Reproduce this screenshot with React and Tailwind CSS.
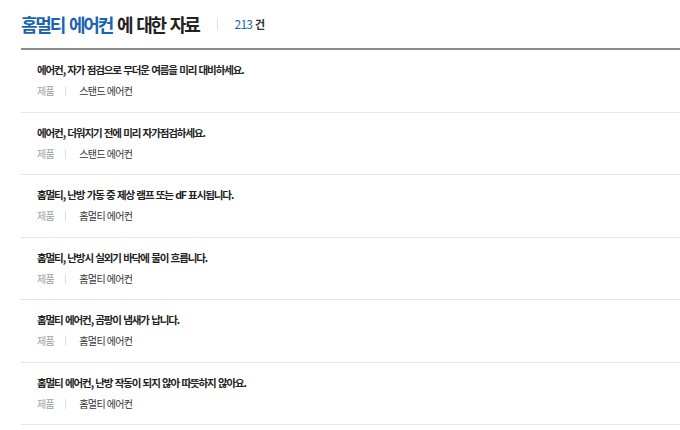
import React from 'react';

const items = [
  { title: '에어컨, 자가 점검으로 무더운 여름을 미리 대비하세요.', product: '스탠드 에어컨' },
  { title: '에어컨, 더워지기 전에 미리 자가점검하세요.', product: '스탠드 에어컨' },
  { title: '홈멀티, 난방 가동 중 제상 램프 또는 dF 표시됩니다.', product: '홈멀티 에어컨' },
  { title: '홈멀티, 난방시 실외기 바닥에 물이 흐릅니다.', product: '홈멀티 에어컨' },
  { title: '홈멀티 에어컨, 곰팡이 냄새가 납니다.', product: '홈멀티 에어컨' },
  { title: '홈멀티 에어컨, 난방 작동이 되지 않아 따뜻하지 않아요.', product: '홈멀티 에어컨' },
];

const font = { fontFamily: '"Noto Sans CJK KR", "Noto Sans", sans-serif' };

export default function App() {
  return (
    <div className="w-[680px] h-[430px] bg-white overflow-hidden pl-[21px]" style={font}>
      <div className="h-[50px] flex items-center border-b-2 border-[#8a8a8a]">
        <h2 className="text-[18px] leading-[24px] font-bold tracking-[-2.2px] [word-spacing:3px] text-[#222]">
          <span className="text-[#1a64b0]">홈멀티 에어컨</span> 에 대한 자료
        </h2>
        <span className="ml-[18px] w-px h-[12px] bg-[#e0e0e0]" />
        <span className="ml-[17px] text-[12px] text-[#1a64b0] tracking-[-0.8px]">213</span>
        <span className="ml-[3px] text-[11px] font-bold text-[#333]">건</span>
      </div>
      <ul>
        {items.map((item, i) => (
          <li key={i} className="h-[62.5px] border-b border-[#e6e6e6] pl-[16px] pt-[12px]">
            <p className="text-[10.5px] leading-[16px] font-bold text-[#222] tracking-[-1.1px] [word-spacing:1px]">{item.title}</p>
            <div className="mt-[5px] flex items-center text-[10px] leading-[16px] tracking-[-0.6px]">
              <span className="text-[#a0a0a0]">제품</span>
              <span className="ml-[11px] w-px h-[10px] bg-[#e0e0e0]" />
              <span className="ml-[13px] text-[#333]">{item.product}</span>
            </div>
          </li>
        ))}
      </ul>
    </div>
  );
}
